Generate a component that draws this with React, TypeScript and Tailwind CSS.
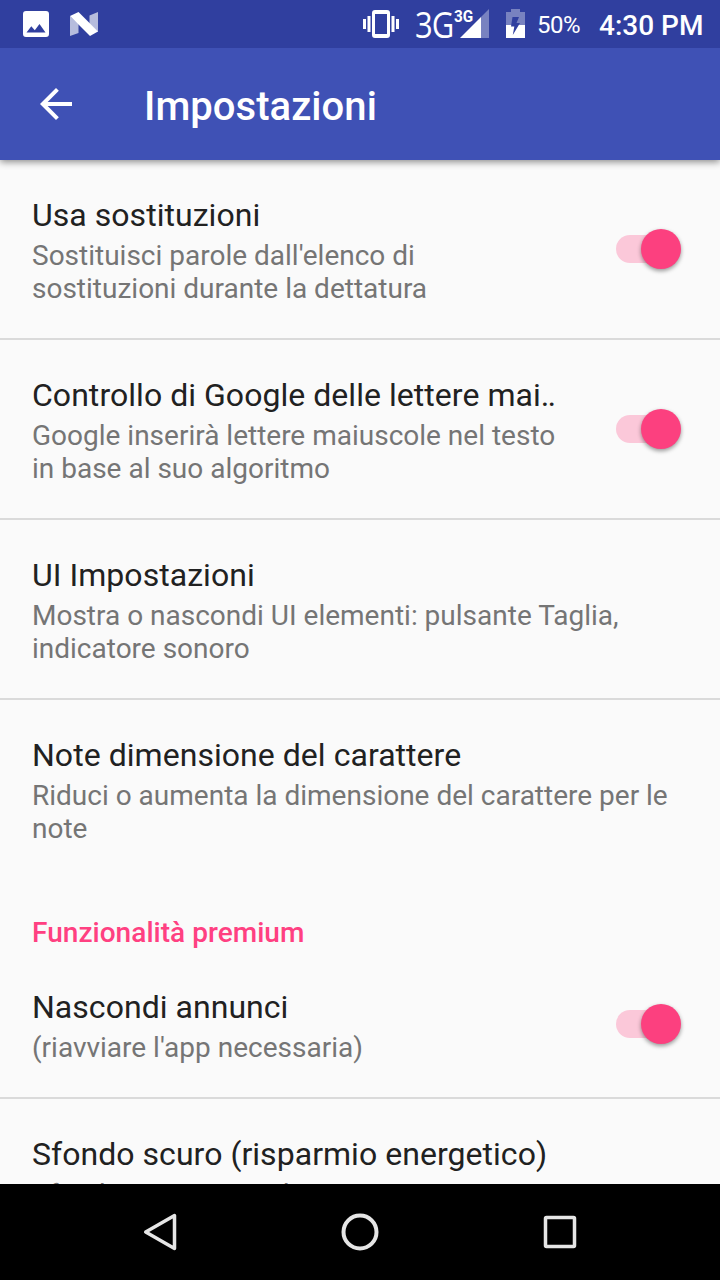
import React, { useState } from 'react';

interface SettingItem {
  id: string;
  title: string;
  summary: string;
  toggle?: boolean;
}

const generalItems: SettingItem[] = [
  {
    id: 'replacements',
    title: 'Usa sostituzioni',
    summary: "Sostituisci parole dall'elenco di sostituzioni durante la dettatura",
    toggle: true,
  },
  {
    id: 'capitals',
    title: 'Controllo di Google delle lettere mai‥',
    summary: 'Google inserirà lettere maiuscole nel testo in base al suo algoritmo',
    toggle: true,
  },
  {
    id: 'ui',
    title: 'UI Impostazioni',
    summary: 'Mostra o nascondi UI elementi: pulsante Taglia, indicatore sonoro',
  },
  {
    id: 'font-size',
    title: 'Note dimensione del carattere',
    summary: 'Riduci o aumenta la dimensione del carattere per le note',
  },
];

const premiumItems: SettingItem[] = [
  { id: 'ads', title: 'Nascondi annunci', summary: "(riavviare l'app necessaria)", toggle: true },
  { id: 'dark', title: 'Sfondo scuro (risparmio energetico)', summary: 'Sfondo nero e testo bianco si usano' },
];

function StatusBar() {
  return (
    <div className="z-20 flex h-12 shrink-0 items-center bg-[#303f9f] text-white">
      {/* Notifications */}
      <svg className="ml-[23px] h-[26px] w-[26px]" viewBox="0 0 26 26">
        <path
          fill="currentColor"
          fillRule="evenodd"
          d="M3 0h20a3 3 0 0 1 3 3v20a3 3 0 0 1-3 3H3a3 3 0 0 1-3-3V3a3 3 0 0 1 3-3zM3.500 21.500h19l-6-8.500-4.700 6.200-3.500-4z"
        />
      </svg>
      <svg className="ml-[21px] h-6 w-7" viewBox="0 0 28 24">
        <path fill="#fff" fillOpacity="0.65" d="M0 4l8.500 8v9L0 24zM28 0v20l-8.500-8V3.500z" />
        <path fill="#fff" d="M0 4l8.500-4L28 19.500 20 24z" />
      </svg>

      {/* System icons */}
      <svg className="ml-[265px] h-7 w-9" viewBox="0 0 36 28" fill="currentColor">
        <path
          fillRule="evenodd"
          d="M12 0h12a3 3 0 0 1 3 3v22a3 3 0 0 1-3 3H12a3 3 0 0 1-3-3V3a3 3 0 0 1 3-3zM12 4v20h12V4z"
        />
        <path d="M0 9h3v10H0zM4.500 6h3v16h-3zM28.500 6h3v16h-3zM33 9h3v10h-3z" />
      </svg>
      <div className="relative ml-4 h-12 w-[74px]">
        <span className="absolute top-[5px] left-0 origin-left scale-x-[.86] font-['Open_Sans'] text-[36px] leading-[40px] tracking-[-1px]">
          3G
        </span>
        <span className="absolute top-[7px] left-[39px] origin-left scale-x-[.9] text-[17px] leading-[18px] font-bold">
          3G
        </span>
        <svg className="absolute top-[9px] left-[45px] h-[29px] w-[29px]" viewBox="0 0 29 29" fill="#fff">
          <path fillOpacity="0.35" d="M21 8l8-8v29h-8z" />
          <path d="M0 29L21 8v21z" />
        </svg>
      </div>
      <svg className="mb-0.5 ml-[17px] h-[29px] w-[19px]" viewBox="0 0 19 29" fill="#fff">
        <path fillOpacity="0.35" d="M5 0h9v3h5v13H0V3h5z" />
        <path d="M0 16h19v13H0z" />
        <path fill="#303f9f" d="M6.500 8H13l-2.500 6H14L6.800 26l1.500-8.500H5z" />
      </svg>
      <span className="ml-3 w-[48px] pt-0.5 text-[24px] tracking-[-0.5px]">50%</span>
      <span className="ml-[14px] pt-1 text-[28px] font-medium whitespace-nowrap">4:30 PM</span>
    </div>
  );
}

function AppBar() {
  return (
    <header className="z-10 flex h-28 shrink-0 items-center bg-[#3f51b5] text-white shadow-[0_2px_7px_rgba(0,0,0,0.45)]">
      <button aria-label="Indietro" className="ml-10">
        <svg className="h-8 w-8" viewBox="4 4 16 16" fill="currentColor">
          <path d="M20 11H7.830l5.590-5.590L12 4l-8 8 8 8 1.410-1.410L7.830 13H20z" />
        </svg>
      </button>
      <h1 className="ml-[72px] pt-1.5 text-[40px] leading-none font-medium tracking-[0.05px]">Impostazioni</h1>
    </header>
  );
}

function Toggle({ on, onChange }: { on: boolean; onChange: () => void }) {
  return (
    <button role="switch" aria-checked={on} onClick={onChange} className="relative h-[41px] w-[67px] shrink-0">
      <span className={`absolute top-1.5 left-0 h-7 w-[58px] rounded-full ${on ? 'bg-[#fbc8d9]' : 'bg-[#b9b9b9]'}`} />
      <span
        className={`absolute top-0 h-10 w-10 rounded-full shadow-[0_2px_4px_rgba(0,0,0,0.4)] ${
          on ? 'right-0.5 bg-[#fc407f]' : 'left-0 bg-[#f1f1f1]'
        }`}
      />
    </button>
  );
}

function SettingRow({ item, divider }: { item: SettingItem; divider: boolean }) {
  const [on, setOn] = useState(true);

  return (
    <div
      className={`flex shrink-0 items-center border-b-2 pr-[37px] pl-8 ${divider ? 'border-[#dadada]' : 'border-transparent'}`}
    >
      <div className="min-w-0 flex-1 pt-9 pb-[33px]">
        <h2 className="text-[32px] leading-[38px] tracking-[0.04px] whitespace-nowrap text-[#212121]">{item.title}</h2>
        <p className={`mt-[5px] text-[28px] leading-[33px] text-[#757575] ${item.toggle ? 'max-w-[528px]' : ''}`}>
          {item.summary}
        </p>
      </div>
      {item.toggle && <Toggle on={on} onChange={() => setOn(!on)} />}
    </div>
  );
}

function NavBar() {
  return (
    <nav className="z-10 flex h-24 shrink-0 items-center justify-center gap-[152px] bg-black text-[#e6e6e6]">
      <svg className="h-12 w-12" viewBox="0 0 48 48" fill="none" stroke="currentColor" strokeWidth="3.500">
        <path strokeLinejoin="round" d="M38.500 7.500v33L9.700 24z" />
      </svg>
      <svg className="h-12 w-12" viewBox="0 0 48 48" fill="none" stroke="currentColor" strokeWidth="4">
        <circle cx="24" cy="24" r="16.500" />
      </svg>
      <svg className="h-12 w-12" viewBox="0 0 48 48" fill="none" stroke="currentColor" strokeWidth="3.500">
        <rect x="9.500" y="9.500" width="29" height="29" rx="1" />
      </svg>
    </nav>
  );
}

export default function App() {
  return (
    <div className="flex h-[1280px] w-[720px] flex-col overflow-hidden bg-[#fafafa] font-[Roboto,sans-serif]">
      <StatusBar />
      <AppBar />
      <main className="flex min-h-0 flex-1 flex-col overflow-hidden">
        {generalItems.map((item, i) => (
          <SettingRow key={item.id} item={item} divider={i < generalItems.length - 1} />
        ))}
        <h3 className="flex h-[72px] shrink-0 items-center pt-[33px] pl-8 text-[28px] leading-[33px] font-medium tracking-[0.04px] text-[#ff4081]">
          Funzionalità premium
        </h3>
        {premiumItems.map((item) => (
          <SettingRow key={item.id} item={item} divider />
        ))}
      </main>
      <NavBar />
    </div>
  );
}
